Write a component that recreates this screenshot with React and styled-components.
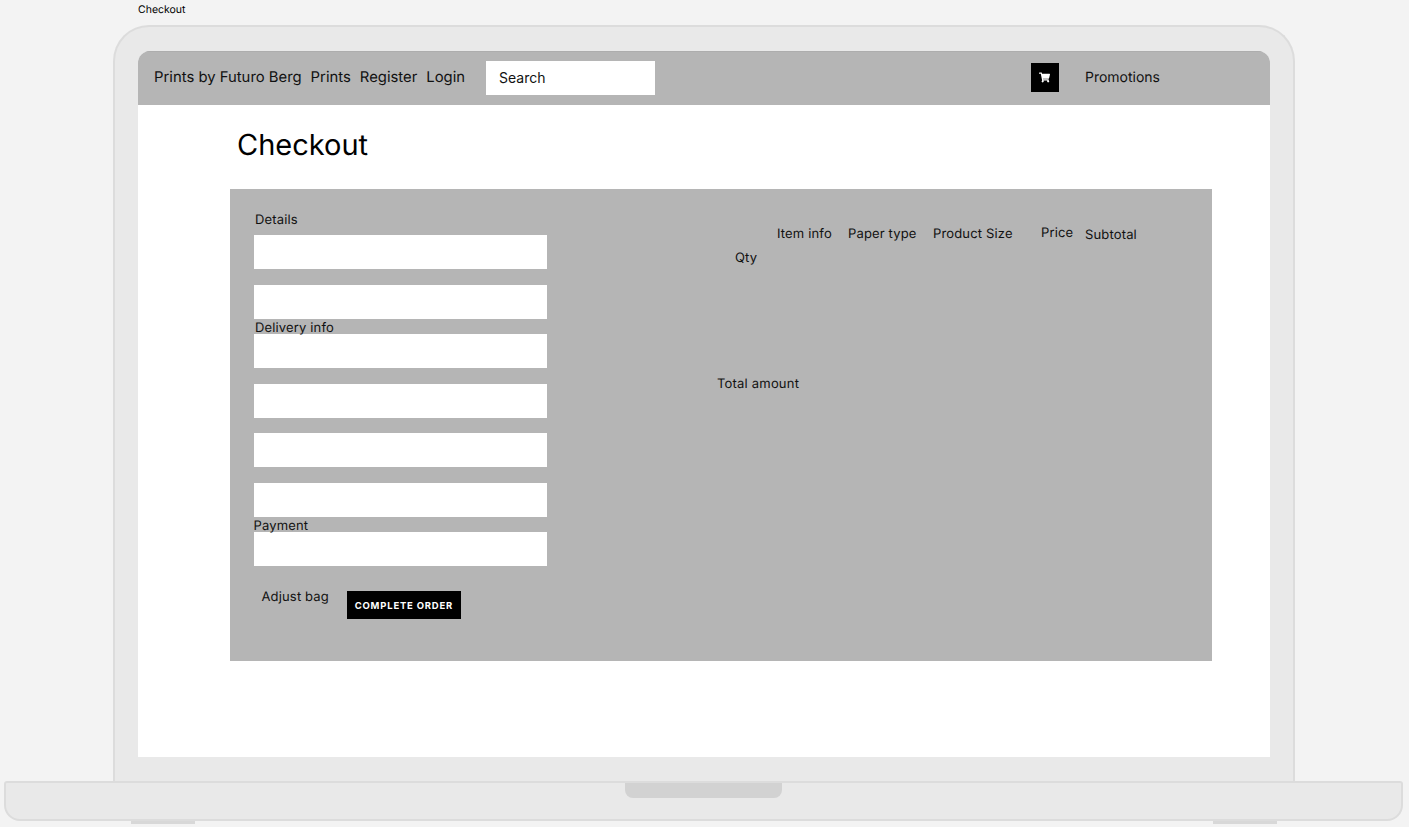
import styled, { createGlobalStyle } from "styled-components";
import { FaShoppingCart } from "react-icons/fa";

const GlobalStyle = createGlobalStyle`
    html, body {
        margin: 0;
        padding: 0;
        height: 827px;
        overflow: hidden;
        background: #f3f3f3;
        font-family: Inter, "Liberation Sans", sans-serif;
        text-rendering: geometricPrecision;
        color: #000;
    }
`;

const headers = [
    { label: "Item info", width: 71, top: 1 },
    { label: "Paper type", width: 85, top: 1 },
    { label: "Product Size", width: 108, top: 1 },
    { label: "Price", width: 44, top: 0 },
    { label: "Subtotal", width: 60, top: 2 },
];

function App() {
    return (
        <Page>
            <GlobalStyle />
            <FrameLabel>Checkout</FrameLabel>
            <Lid>
                <Screen>
                    <Nav>
                        <NavLink>Prints by Futuro Berg</NavLink>
                        <NavLink>Prints</NavLink>
                        <NavLink>Register</NavLink>
                        <NavLink>Login</NavLink>
                        <Search placeholder="Search" />
                        <CartButton>
                            <FaShoppingCart size={11} />
                        </CartButton>
                        <Promotions>Promotions</Promotions>
                    </Nav>
                    <Title>Checkout</Title>
                    <Panel>
                        <Form>
                            <Label $indent={1.5} $height={16} $gap={8}>Details</Label>
                            <Field />
                            <Spacer />
                            <Field />
                            <Label $indent={1.5}>Delivery info</Label>
                            <Field />
                            <Spacer />
                            <Field />
                            <Spacer />
                            <Field />
                            <Spacer />
                            <Field />
                            <Label>Payment</Label>
                            <Field />
                            <Actions>
                                <AdjustBag>Adjust bag</AdjustBag>
                                <CompleteButton>COMPLETE ORDER</CompleteButton>
                            </Actions>
                        </Form>
                        <Summary>
                            <HeaderRow>
                                {headers.map((h) => (
                                    <HeaderCell key={h.label} $width={h.width} $top={h.top}>
                                        {h.label}
                                    </HeaderCell>
                                ))}
                            </HeaderRow>
                            <Qty>Qty</Qty>
                            <Total>Total amount</Total>
                        </Summary>
                    </Panel>
                </Screen>
            </Lid>
            <Base>
                <Notch />
            </Base>
            <Feet>
                <Foot />
                <Foot />
            </Feet>
        </Page>
    );
}

export default App;

const Page = styled.div`
    width: 1409px;
    height: 827px;
    overflow: hidden;
`;

const FrameLabel = styled.div`
    height: 25px;
    padding: 3px 0 0 138px;
    box-sizing: border-box;
    font-size: 10.5px;
    line-height: 13px;
`;

const Lid = styled.div`
    box-sizing: border-box;
    width: 1182px;
    height: 756px;
    margin-left: 113px;
    padding: 24px 23px 0;
    background: #e9e9e9;
    border: 2px solid #dcdcdc;
    border-bottom: 0;
    border-radius: 36px 36px 0 0;
`;

const Screen = styled.div`
    height: 706px;
    background: #fff;
    border-radius: 12px 12px 0 0;
    overflow: hidden;
`;

const Nav = styled.div`
    box-sizing: border-box;
    height: 54px;
    display: flex;
    align-items: center;
    gap: 9px;
    padding: 0 110px 0 16px;
    background: #b5b5b5;
    border-top: 1px solid #adadad;
`;

const NavLink = styled.span`
    font-size: 14.85px;
    line-height: 18px;
    color: #111;
    margin-top: -4px;
`;

const Search = styled.input`
    box-sizing: border-box;
    width: 169px;
    height: 34px;
    margin: -2px 0 0 12px;
    padding: 0 13px;
    border: 0;
    border-radius: 0;
    background: #fff;
    font-family: inherit;
    font-size: 14px;

    &::placeholder {
        color: #111;
        opacity: 1;
    }
`;

const CartButton = styled.div`
    width: 28px;
    height: 29px;
    margin: -2px 0 0 auto;
    display: flex;
    align-items: center;
    justify-content: center;
    background: #000;
    color: #fff;
`;

const Promotions = styled.span`
    margin: -2px 0 0 17px;
    font-size: 14px;
    line-height: 18px;
    color: #111;
`;

const Title = styled.h1`
    margin: 0;
    padding: 24px 0 0 99px;
    height: 84px;
    box-sizing: border-box;
    font-size: 29px;
    line-height: 32px;
    font-weight: 400;
`;

const Panel = styled.div`
    box-sizing: border-box;
    width: 982px;
    height: 472px;
    margin-left: 92px;
    padding: 22px 0 0 23.5px;
    display: flex;
    background: #b5b5b5;
`;

const Form = styled.div`
    width: 293.5px;
    flex-shrink: 0;
`;

const Label = styled.div`
    height: ${(p) => p.$height || 15.5}px;
    margin-bottom: ${(p) => p.$gap || 0}px;
    padding-left: ${(p) => p.$indent || 0}px;
    font-size: 13px;
    line-height: ${(p) => (p.$height ? p.$height + 2 : 19.5)}px;
    letter-spacing: 0.15px;
    color: #111;
    white-space: nowrap;
`;

const Field = styled.div`
    height: 34px;
    background: #fff;
`;

const Spacer = styled.div`
    height: 15.5px;
`;

const Actions = styled.div`
    display: flex;
    align-items: flex-start;
    margin-top: 25px;
    padding-left: 8px;
`;

const AdjustBag = styled.span`
    font-size: 13px;
    line-height: 13px;
    color: #111;
    margin-right: 18px;
    letter-spacing: 0.15px;
`;

const CompleteButton = styled.button`
    box-sizing: border-box;
    width: 114px;
    height: 28px;
    padding: 0;
    border: 0;
    background: #000;
    color: #fff;
    font-family: inherit;
    font-size: 9.5px;
    font-weight: 700;
    letter-spacing: 0.8px;
`;

const Summary = styled.div`
    margin-left: 170px;
    padding-top: 15px;
`;

const HeaderRow = styled.div`
    display: flex;
    align-items: flex-start;
    height: 16px;
    padding-left: 60px;
`;

const HeaderCell = styled.span`
    width: ${(p) => p.$width}px;
    margin-top: ${(p) => p.$top}px;
    font-size: 13px;
    line-height: 15px;
    letter-spacing: 0.15px;
    color: #111;
    white-space: nowrap;
`;

const Qty = styled.div`
    margin: 9px 0 0 18px;
    font-size: 13px;
    line-height: 15px;
    letter-spacing: 0.15px;
    color: #111;
`;

const Total = styled.div`
    margin-top: 111px;
    font-size: 13px;
    line-height: 15px;
    letter-spacing: 0.2px;
    color: #111;
`;

const Base = styled.div`
    box-sizing: border-box;
    width: 1399px;
    height: 40px;
    margin-left: 4px;
    display: flex;
    justify-content: center;
    background: #e9e9e9;
    border: 2px solid #dcdcdc;
    border-radius: 3px 3px 16px 16px;
`;

const Notch = styled.div`
    width: 157px;
    height: 15px;
    background: #d2d2d2;
    border-radius: 0 0 8px 8px;
`;

const Feet = styled.div`
    width: 1146px;
    margin-left: 131px;
    display: flex;
    justify-content: space-between;
`;

const Foot = styled.div`
    width: 64px;
    height: 3px;
    background: #d8d8d8;
`;
